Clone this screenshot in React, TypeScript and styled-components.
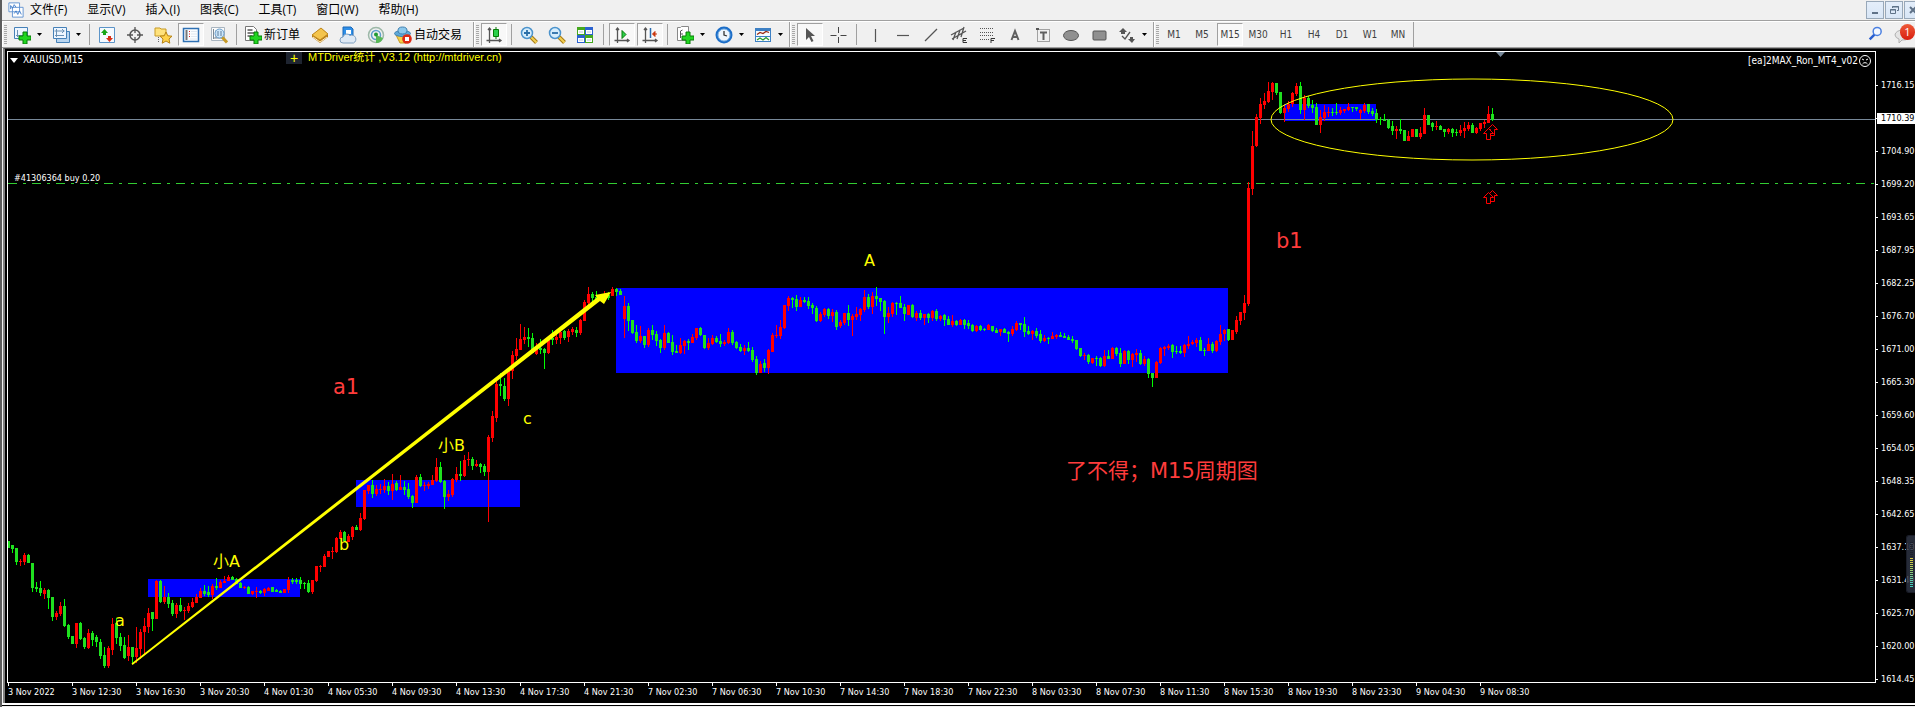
import React from "react";
import styled, { createGlobalStyle } from "styled-components";

const UI_FONT = '"Open Sans", "Noto Sans CJK SC", sans-serif';
const CHART_FONT = '"DejaVu Sans Condensed", "DejaVu Sans", "Noto Sans CJK SC", sans-serif';

const GlobalStyle = createGlobalStyle`
  * { box-sizing: border-box; }
  body {
    margin: 0;
    background: #000;
    font-family: ${UI_FONT};
    overflow: hidden;
  }
  button { font: inherit; color: inherit; }
`;

/* ---------- window chrome ---------- */

const Window = styled.div`
  display: flex;
  flex-direction: column;
  border-left: 2px solid #5c5c5c;
  background: #f0f0f0;
`;

const MenuBar = styled.nav`
  display: flex;
  align-items: center;
  height: 20px;
  padding-left: 6px;
  background: #f0f0f0;
`;

const MenuList = styled.div`
  display: flex;
  flex: 1;
  gap: 20px;
  padding-left: 6px;
`;

const MenuItem = styled.button`
  padding: 0;
  border: 0;
  background: none;
  color: #000;
  font-size: 12px;
  line-height: 18px;
  white-space: nowrap;
`;

const WindowButtons = styled.div`
  display: flex;
  gap: 1px;
  width: 49px;
  overflow: hidden;
`;

const WindowButton = styled.button`
  display: flex;
  flex: none;
  align-items: center;
  justify-content: center;
  width: 18px;
  height: 18px;
  padding: 0;
  border: 1px solid #98a8b9;
  background: linear-gradient(#e4eefa, #d8e6f6);
`;

const ToolBar = styled.div`
  display: flex;
  height: 28px;
  padding-top: 1px;
  border-top: 1px solid #a0a0a0;
  border-bottom: 1px solid #a0a0a0;
  background: #f0f0f0;
  box-shadow: inset 0 1px 0 #fff;
`;

const Band = styled.div`
  display: flex;
  align-items: center;
  padding-right: 1px;
  border-right: 1px solid #a0a0a0;
  box-shadow: inset 1px 0 0 #fff;
`;

const Grip = styled.span`
  width: 3px;
  height: 19px;
  margin: 0 1px 0 2px;
  background: repeating-linear-gradient(#a8a8a8 0 1px, #f0f0f0 1px 2px);
`;

const Divider = styled.span<{ $wide?: boolean }>`
  width: 1px;
  height: 21px;
  margin: 0 ${(p) => (p.$wide ? 4 : 3)}px;
  background: #a0a0a0;
`;

const ToolButton = styled.button<{ $pressed?: boolean }>`
  display: flex;
  align-items: center;
  justify-content: center;
  width: 26px;
  height: 23px;
  margin: 0 1px;
  padding: 0;
  border: 1px solid;
  border-color: ${(p) => (p.$pressed ? "#a0a0a0 #fff #fff #a0a0a0" : "transparent")};
  background: ${(p) => (p.$pressed ? "#f8f8f8" : "none")};
  color: #404040;
  font-family: ${CHART_FONT};
  font-size: 10px;
`;

const DropButton = styled.button`
  display: flex;
  align-items: center;
  gap: 6px;
  width: 39px;
  height: 23px;
  padding: 0 0 0 5px;
  border: 0;
  background: none;
`;

const LabelButton = styled.button<{ $width: number }>`
  display: flex;
  align-items: center;
  gap: 2px;
  width: ${(p) => p.$width}px;
  height: 23px;
  padding: 0 0 0 4px;
  border: 0;
  background: none;
  color: #000;
  font-size: 12px;
  line-height: 18px;
  white-space: nowrap;
`;

const Corner = styled.div`
  display: flex;
  flex: 1;
  justify-content: flex-end;
  align-items: center;
  gap: 5px;
`;

const CornerButton = styled.button`
  position: relative;
  display: flex;
  width: 21px;
  height: 23px;
  padding: 3px 0 0;
  border: 0;
  background: none;
`;

const Badge = styled.span`
  position: absolute;
  top: 1px;
  right: 0;
  width: 15px;
  height: 16px;
  border-radius: 8px;
  background: linear-gradient(#ee5a38, #d81e10);
  color: #fff;
  font-size: 11px;
  line-height: 16px;
  text-align: center;
`;

/* ---------- chart window ---------- */

const ChartWindow = styled.main`
  position: relative;
  display: grid;
  grid-template-columns: 1fr 39px;
  margin-left: 1px;
  padding: 2px 0 0 2px;
  border-left: 2px solid #808080;
  border-top: 1px solid #404040;
  background: #000;
  color: #fff;
  font-family: ${CHART_FONT};
`;

const PlotArea = styled.section`
  position: relative;
  border: 1px solid #fff;
`;

const PlotSvg = styled.svg`
  display: block;
  width: 100%;
  height: 630px;
`;

const PlotHeader = styled.header`
  position: absolute;
  top: 0;
  left: 0;
  right: 0;
  display: flex;
  align-items: flex-start;
  padding: 0 4px 0 2px;
  font-size: 10px;
  line-height: 14px;
`;

const Symbol = styled.h1`
  display: flex;
  align-items: center;
  gap: 5px;
  width: 276px;
  margin: 0;
  padding-top: 1px;
  font-size: 10px;
  font-weight: 400;
`;

const ExpandButton = styled.button`
  width: 16px;
  height: 12px;
  padding: 0;
  border: 0;
  background: #1e2430;
  color: #ff0;
  font-family: "Liberation Sans", sans-serif;
  font-size: 14px;
  line-height: 10px;
`;

const StatTitle = styled.span`
  flex: 1;
  padding-left: 6px;
  color: #ff0;
  font-family: "Liberation Sans", "Noto Sans CJK SC", sans-serif;
  font-size: 11px;
  line-height: 10px;
`;

const Expert = styled.span`
  display: flex;
  align-items: center;
  gap: 1px;
  padding-top: 2px;
`;

const PriceAxis = styled.ol`
  margin: 0;
  padding: 18px 0 0;
  height: 632px;
  list-style: none;
`;

const PriceTick = styled.li<{ $current?: boolean }>`
  display: flex;
  align-items: center;
  height: 33px;
  font-size: 9px;
  line-height: 11px;

  &::before {
    content: "";
    width: ${(p) => (p.$current ? 1 : 2)}px;
    height: 1px;
    background: #fff;
  }
  span {
    flex: 1;
    padding-left: ${(p) => (p.$current ? 4 : 3)}px;
    background: ${(p) => (p.$current ? "#fff" : "transparent")};
    color: ${(p) => (p.$current ? "#000" : "#fff")};
  }
`;

const TimeAxis = styled.ol`
  display: flex;
  margin: 0;
  padding: 0 0 0 1px;
  height: 20px;
  overflow: hidden;
  list-style: none;
`;

const TimeTick = styled.li`
  flex: none;
  width: 64px;
  font-size: 9px;
  line-height: 12px;
  white-space: nowrap;

  &::before {
    content: "";
    display: block;
    width: 1px;
    height: 3px;
    background: #fff;
  }
`;

const LevelMeter = styled.aside`
  position: absolute;
  right: 0;
  top: 486px;
  display: flex;
  flex-direction: column;
  gap: 1px;
  width: 9px;
  height: 58px;
  padding: 6px 2px 0 3px;
  border: 1px solid #1a1d28;
  border-right: 0;
  border-radius: 3px 0 0 3px;
  background: rgba(45, 50, 66, 0.85);
`;

const MeterBar = styled.i<{ $color: string }>`
  flex: none;
  height: 1px;
  background: ${(p) => p.$color};
`;

const TabStrip = styled.footer`
  height: 5px;
  border-top: 2px solid #fff;
  background: linear-gradient(#000 0 1px, #f0f0f0 1px);
`;

/* ---------- icons ---------- */

const Icon = ({ children, size = 18 }: { children: React.ReactNode; size?: number }) => (
  <svg width={size} height={size} viewBox="0 0 18 18" fill="none" aria-hidden="true">
    {children}
  </svg>
);

const Caret = () => (
  <svg width="5" height="3" viewBox="0 0 5 3" aria-hidden="true">
    <path d="M0 0h5L2.500 3z" fill="#000" />
  </svg>
);

const Plus = () => (
  <path d="M10 6h4v4h4v4h-4v4h-4v-4H6v-4h4z" fill="#20d620" stroke="#087a08" />
);

const AppIcon = () => (
  <Icon size={16}>
    <path d="M1 1h12v10H1z M5 6h12v11H5z" fill="#fff" stroke="#5b8fd0" />
    <path d="M3 8V4l2 3 2-4 2 3M7 13l2-3 2 4 2-4 2 4" stroke="#3a78c8" />
  </Icon>
);
const NewChartIcon = () => (
  <Icon>
    <path d="M1.500 1.500h13v11h-13z" fill="#eef6ff" stroke="#4681b8" />
    <path d="M4.500 4v7M3 9.500h9" stroke="#6b91b5" />
    <Plus />
  </Icon>
);
const ProfilesIcon = () => (
  <Icon>
    <path d="M4.500 5.500h13v11h-13z" fill="#b8d5f0" stroke="#4681b8" />
    <path d="M1.500 1.500h13v11h-13z" fill="#eef6ff" stroke="#4681b8" />
    <path d="M4.500 3v8M2.500 5h10M3 9.500h9M10 3l2 2-2 2" stroke="#6b91b5" />
  </Icon>
);
const MarketIcon = () => (
  <Icon>
    <path d="M1.500 1.500h15v15h-15z" fill="#f6faff" stroke="#5c94c8" />
    <path d="M3 7l3.500-4L10 7H8v2H5V7z" fill="#19a619" />
    <path d="M8 12l3.500 4 3.500-4h-2v-2h-3v2z" fill="#d83018" />
  </Icon>
);
const TargetIcon = () => (
  <Icon>
    <circle cx="9" cy="9" r="5" stroke="#555" strokeWidth="1.500" />
    <path d="M9 1v6M9 11v6M1 9h6M11 9h6" stroke="#555" strokeWidth="1.300" />
  </Icon>
);
const FavoritesIcon = () => (
  <Icon>
    <path d="M1 2h5l1 1h5v7H1z" fill="#ffe27c" stroke="#c79a26" />
    <path d="M4.500 11v6" stroke="#666" strokeDasharray="1 1" />
    <path d="M12 6l1.800 3.800 4.200.4-3 2.800.8 4.200L12 15l-3.800 2.200.8-4.200-3-2.800 4.200-.4z" fill="#ffd24a" stroke="#b78314" />
  </Icon>
);
const TerminalIcon = () => (
  <Icon>
    <path d="M1.500 2.500h15v13h-15z" fill="#fafdff" stroke="#2f71b4" strokeWidth="1.500" />
    <path d="M4.500 4v10" stroke="#777" strokeWidth="2" />
    <path d="M7 5.500h1M7 8h1M7 10.500h1" stroke="#d22" />
    <path d="M9 5.500h6M9 8h6M9 10.500h6M8 13h7" stroke="#e0e8f0" />
  </Icon>
);
const TesterIcon = () => (
  <Icon>
    <path d="M1.500 1.500h13v13h-13z" fill="#fbfbfb" stroke="#a9b5c0" />
    <path d="M3.500 3v10M6 4v8M3 12h9" stroke="#7b8894" />
    <path d="M12 11l5 5.500" stroke="#c79a26" strokeWidth="3" />
    <circle cx="9.500" cy="7.500" r="4.500" fill="#c9e3f8" fillOpacity=".9" stroke="#6b9fcc" />
    <path d="M8 5v5M11 5v5" stroke="#5d7e9d" />
  </Icon>
);
const OrderIcon = () => (
  <Icon>
    <path d="M1.500.5h8l3 3v11h-11z" fill="#fff" stroke="#777" />
    <path d="M3.500 4h5M3.500 7h7M3.500 10h5" stroke="#555" strokeWidth="1.500" />
    <Plus />
  </Icon>
);
const BookIcon = () => (
  <Icon>
    <path d="M1 9l9-7 7 6v3l-8 6-8-6z" fill="#b87a14" />
    <path d="M1 9l9-7 7 6-8 6z" fill="#f4c44c" stroke="#c08a20" />
    <path d="M2 11l7 5 7-5" stroke="#fff0c0" />
  </Icon>
);
const HostingIcon = () => (
  <Icon>
    <path d="M4 1h8l2 2v9H4z" fill="#2f8fe8" stroke="#1b68b8" />
    <path d="M7 4h5v4H7z" fill="#fff" />
    <path d="M4 17a3 3 0 010-6 4 4 0 017-1.500A3.500 3.500 0 0114.500 17z" fill="#dfe9f4" stroke="#7f9fc0" />
  </Icon>
);
const SignalIcon = () => (
  <Icon>
    <circle cx="9" cy="9" r="7.500" stroke="#9db8a8" strokeWidth="1.500" />
    <circle cx="9" cy="9" r="4.500" stroke="#5f9fca" strokeWidth="1.500" />
    <path d="M9 9v8c4 0 6-2 7-5z" fill="#58b858" />
    <circle cx="9" cy="8.500" r="2" fill="#1f9a34" />
  </Icon>
);
const AutoIcon = () => (
  <Icon>
    <path d="M2 9h14l-4 8H6z" fill="#f6cf45" stroke="#c79a26" />
    <ellipse cx="8.500" cy="7.500" rx="8" ry="3" fill="#5fa9d8" stroke="#3f80b0" />
    <ellipse cx="8.500" cy="4.500" rx="4.500" ry="3.500" fill="#8cc8ec" stroke="#3f80b0" />
    <circle cx="13" cy="13" r="4.800" fill="#dd2a14" />
    <path d="M11 11h4v4h-4z" fill="#fff" />
  </Icon>
);
const Axes = () => (
  <path d="M4.500 2v15M1.500 14.500H16M3 4l1.500-2L6 4M14 13l2 1.500-2 1.500" stroke="#555" strokeWidth="1.300" />
);
const CandleIcon = () => (
  <Icon>
    <Axes />
    <path d="M11 1v12" stroke="#067a06" />
    <path d="M8.500 3.500h5v7h-5z" fill="#2ad04a" stroke="#067a06" />
  </Icon>
);
const Zoom = ({ plus }: { plus?: boolean }) => (
  <Icon>
    <path d="M11 11l5.500 5.500" stroke="#a87b12" strokeWidth="4" />
    <path d="M11 11l5.500 5.500" stroke="#f2cf52" strokeWidth="2" />
    <circle cx="7" cy="7" r="5.500" fill="#d6edfc" stroke="#4b93cc" strokeWidth="1.500" />
    <path d={plus ? "M4 7h6M7 4v6" : "M4 7h6"} stroke="#2b6fa8" strokeWidth="1.800" />
  </Icon>
);
const TileIcon = () => (
  <Icon>
    <path d="M1 1h8v8H1zM9 9h8v8H9z" fill="#45a81e" />
    <path d="M9 1h8v8H9zM1 9h8v8H1z" fill="#2b62d0" />
    <path d="M2 4h6v4H2zM10 4h6v4h-6zM2 12h6v4H2zM10 12h6v4h-6z" fill="#fff" />
    <path d="M3 6h4M11 6h4M3 14h4M11 14h4" stroke="#b8c8d8" />
  </Icon>
);
const ScrollIcon = () => (
  <Icon>
    <Axes />
    <path d="M9 4.500v8l4-4z" fill="#2ad04a" stroke="#067a06" />
  </Icon>
);
const ShiftIcon = () => (
  <Icon>
    <Axes />
    <path d="M9.500 2v10" stroke="#2a6cb0" strokeWidth="1.500" />
    <path d="M16 8h-3M14 5.500L11.500 8l2.500 2.500z" fill="#c8340c" stroke="#c8340c" />
  </Icon>
);
const IndicatorIcon = () => (
  <Icon>
    <path d="M1.500 1.500h3l1-1h7v14h-11z" fill="#fff" stroke="#888" />
    <path d="M4.500 12V5l2-1M4 8h3" stroke="#555" />
    <Plus />
  </Icon>
);
const ClockIcon = () => (
  <Icon>
    <circle cx="9" cy="9" r="8.500" fill="#1c6ec8" />
    <circle cx="9" cy="9" r="6" fill="#eef5fc" stroke="#7fb4e6" />
    <path d="M9 5v4l3 1" stroke="#333" strokeWidth="1.300" />
  </Icon>
);
const TemplateIcon = () => (
  <Icon>
    <path d="M1 2h16v14H1z" fill="#3d80c4" />
    <path d="M2 5h14v5H2zM2 11h14v4H2z" fill="#f6fbff" />
    <path d="M3 8.500l3-2 3 1 3-2 3 1" stroke="#9a2a10" strokeWidth="1.300" />
    <path d="M3 14l3-2 3 2 3-2.500 3 2.500" stroke="#2a9a2a" strokeWidth="1.300" />
  </Icon>
);
const CursorIcon = () => (
  <Icon>
    <path d="M5 2v12l3-3 2.500 5 2-1L10 10h4z" fill="#555" />
  </Icon>
);
const CrossIcon = () => (
  <Icon>
    <path d="M9.500 1v6M9.500 11v6M1.500 9.500h6M11.500 9.500h6" stroke="#444" />
  </Icon>
);
const StrokeIcon = ({ d }: { d: string }) => (
  <Icon>
    <path d={d} stroke="#555" strokeWidth="1.200" />
  </Icon>
);
const ChannelIcon = () => (
  <Icon>
    <path d="M1 9L14 2M2 13L16 5M3 14l3-8M7 13l3-9M11 11l3-10" stroke="#555" strokeWidth="1.300" />
    <path d="M17 12.500h-4v4h4M13 14.500h3" stroke="#333" />
  </Icon>
);
const FiboIcon = () => (
  <Icon>
    <path d="M2 2.500h14M2 6.500h14M2 9.500h14M2 13.500h9" stroke="#555" strokeDasharray="1 1" />
    <path d="M13 17v-4.500h4M13 14.500h3" stroke="#333" />
  </Icon>
);
const LetterIcon = () => (
  <Icon>
    <path d="M5.500 14L9 5l3.500 9M6.500 11h5" stroke="#606060" strokeWidth="2" />
  </Icon>
);
const TextBoxIcon = () => (
  <Icon>
    <path d="M3.500 3.500h12v12h-12z" stroke="#555" strokeDasharray="1 1" />
    <path d="M2 2h3v2H2z" fill="#555" />
    <path d="M6 6.500h7M9.500 6v8" stroke="#606060" strokeWidth="2" />
  </Icon>
);
const EllipseIcon = () => (
  <Icon>
    <ellipse cx="9" cy="9.500" rx="7.500" ry="5" fill="#909090" stroke="#555" />
  </Icon>
);
const RectIcon = () => (
  <Icon>
    <rect x="3" y="5" width="13" height="9" rx="1" fill="#909090" stroke="#555" />
  </Icon>
);
const ArrowsIcon = () => (
  <Icon>
    <path d="M5 2l4 4H7v2H3V6H1zM14 17l-4-4h2v-2h3v2h2z" fill="#555" />
    <path d="M4 10l3 3 5-7" stroke="#555" strokeWidth="1.300" />
  </Icon>
);
const SearchIcon = () => (
  <Icon size={15}>
    <path d="M2 16l6-6" stroke="#2a5fd0" strokeWidth="3" />
    <circle cx="11" cy="6.500" r="4.800" fill="#f4f8ff" stroke="#4a7fe0" strokeWidth="1.800" />
  </Icon>
);
const ChatIcon = () => (
  <svg width="18" height="18" viewBox="0 0 18 18" aria-hidden="true">
    <path d="M1 9a8 5 0 0116 0 8 5 0 01-9 5l-3 3v-4a6 5 0 01-4-4z" fill="#e4e4e4" stroke="#b0b0b0" />
  </svg>
);
const SadFace = () => (
  <svg width="12" height="12" viewBox="0 0 12 12" fill="none" stroke="#fff" aria-hidden="true">
    <circle cx="6" cy="6" r="5.500" />
    <path d="M3 4l2 1M9 4L7 5M3.500 9a3 3 0 015 0" />
  </svg>
);

/* ---------- chart data ---------- */

// One bar per entry: direction, then high, body top, body bottom and low on the plot's scale.
const BARS = `
G 541 541 548 548;G 545 545 549 553;G 548 548 562 565;R 559 561 562 566;R 553 555 562 565;G 554 555 563 563;
G 563 563 588 592;G 582 587 589 592;G 581 588 593 596;R 588 590 594 599;G 589 590 598 609;G 597 597 617 621;
R 611 613 617 620;R 602 606 614 616;G 599 606 626 627;G 624 625 637 639;G 636 636 644 644;R 623 623 644 648;
G 622 623 639 640;G 637 638 647 649;R 629 633 648 649;G 631 633 640 646;G 635 637 642 647;G 639 642 656 659;
G 647 655 666 668;R 646 648 666 668;R 618 624 650 655;G 618 623 638 644;G 633 637 646 651;G 637 645 658 659;
R 635 647 656 661;G 647 647 657 664;R 627 648 657 663;R 629 632 649 659;R 618 626 632 654;R 608 613 627 633;
G 612 612 619 631;R 580 581 619 619;G 580 581 602 603;R 586 597 602 604;G 593 597 604 608;G 600 603 614 616;
R 603 605 614 618;G 598 605 611 612;R 607 610 611 620;R 603 606 611 613;R 598 602 607 608;R 594 597 603 603;
R 588 591 598 598;G 585 591 594 596;G 586 592 595 597;R 584 586 595 599;G 578 586 588 590;R 580 582 588 588;
R 576 581 583 583;R 575 577 581 581;G 576 577 580 580;G 578 579 584 584;G 582 583 588 588;R 586 587 588 589;
G 586 587 594 594;R 591 591 594 595;R 587 591 592 598;G 590 591 593 594;R 588 589 593 596;R 587 588 591 591;
G 587 587 592 592;G 589 590 592 592;G 590 591 593 593;R 589 589 593 593;R 577 580 590 593;G 578 580 582 584;
G 578 580 582 584;G 577 580 584 589;G 582 583 584 589;G 580 583 592 593;R 580 580 592 594;R 566 566 581 582;
R 565 566 567 572;R 554 556 567 567;R 551 551 557 557;R 547 551 552 559;R 537 538 552 553;R 530 532 539 539;
G 531 532 541 542;R 534 536 542 542;R 526 527 537 540;G 525 527 530 530;R 513 518 530 531;R 490 490 519 520;
R 485 485 491 494;G 480 485 494 498;R 485 489 494 496;R 484 489 490 494;R 479 486 490 493;G 482 486 491 495;
R 474 484 491 500;G 481 483 490 491;R 475 487 490 490;G 481 487 490 495;G 483 489 497 499;G 495 496 503 508;
R 475 477 503 503;G 474 477 486 487;R 482 485 486 491;R 482 484 486 489;R 475 480 485 485;R 458 467 481 482;
G 462 467 482 483;G 480 481 497 509;R 490 494 497 501;R 478 479 495 497;R 467 474 480 482;G 461 474 476 481;
R 455 460 476 477;R 452 459 460 466;G 457 459 466 470;R 460 464 466 467;G 463 464 467 473;G 464 466 472 476;
R 435 437 472 522;R 411 416 438 442;R 380 384 418 422;G 373 384 386 396;G 378 386 399 401;R 368 369 399 406;
R 351 355 371 379;R 338 349 356 360;R 324 339 350 350;R 327 337 340 344;G 328 337 339 347;G 333 338 353 353;
R 343 349 354 355;G 339 348 350 354;G 348 349 353 369;R 337 338 353 354;G 330 338 340 345;R 334 337 340 344;
R 330 332 338 344;G 330 331 338 340;R 329 331 337 342;R 327 329 332 335;G 327 330 333 337;R 319 320 333 335;
R 300 302 321 321;R 287 294 303 309;G 292 294 298 305;G 291 297 299 301;R 295 296 299 300;R 291 294 299 299;
G 292 295 298 300;R 287 289 296 296;G 288 289 292 296;G 289 291 295 295;R 296 306 319 338;G 303 306 321 331;
G 320 320 333 334;G 325 332 341 343;R 326 336 341 343;G 336 336 345 348;R 328 330 345 347;G 325 330 335 340;
G 331 334 341 346;G 339 340 348 353;R 325 333 348 350;G 332 333 343 343;G 335 342 352 355;G 345 351 353 353;
R 338 345 353 354;R 340 341 346 354;G 339 341 343 350;R 334 337 343 343;R 328 328 338 340;G 327 328 335 336;
G 335 335 348 349;R 338 343 348 350;R 335 338 344 345;G 336 338 342 343;G 334 341 344 347;R 340 342 344 346;
R 328 332 343 344;G 330 332 343 345;G 341 342 348 349;G 344 347 351 352;R 345 348 351 355;G 342 348 351 352;
G 347 350 360 362;G 356 359 373 375;R 361 364 373 373;G 359 363 368 372;R 349 350 368 374;R 333 335 352 352;
R 325 335 336 338;R 320 327 336 339;R 305 305 328 329;R 296 298 306 311;G 297 298 300 308;G 295 299 307 311;
R 297 300 307 307;G 297 300 302 303;G 297 301 306 309;G 303 305 308 314;G 306 308 321 322;R 312 314 321 322;
R 308 309 315 317;G 308 309 316 319;R 309 312 316 322;G 310 312 327 330;R 320 322 326 328;R 313 313 323 325;
G 305 313 320 326;R 314 316 320 336;R 307 314 317 320;R 308 309 315 321;R 290 297 310 312;G 294 297 307 309;
R 292 296 307 314;G 287 296 299 306;G 298 298 302 311;G 300 301 317 334;R 307 313 317 323;R 302 303 314 317;
G 302 303 304 315;G 296 303 308 308;G 304 307 314 321;R 305 305 315 315;G 304 305 317 318;R 311 313 318 321;
G 310 313 318 320;R 314 314 318 325;G 313 314 318 323;R 310 311 318 321;G 309 311 319 321;R 315 316 319 321;
G 314 315 320 326;G 316 319 325 325;R 315 321 325 327;G 320 321 325 326;R 319 320 325 325;G 319 320 325 329;
G 320 323 326 329;G 324 325 331 332;R 325 326 331 332;G 325 326 330 331;G 328 329 330 331;R 324 325 330 330;
G 326 326 331 332;G 328 330 333 333;R 329 329 332 336;G 328 329 333 333;G 331 332 334 342;R 326 329 334 336;
R 321 323 330 331;G 323 323 325 330;G 317 324 332 337;G 326 331 334 335;R 330 331 334 340;G 328 331 336 338;
G 330 334 341 343;R 335 338 341 342;G 337 338 339 344;R 332 336 339 339;R 334 335 337 339;G 332 335 337 337;
G 333 336 338 338;G 335 337 340 340;G 336 339 341 343;G 340 340 349 350;G 348 348 356 357;R 353 355 356 360;
G 354 355 362 364;R 358 358 363 364;G 356 358 359 366;G 357 358 366 367;R 350 356 366 367;G 350 356 359 359;
R 347 348 359 359;G 347 348 354 356;G 348 353 364 367;R 350 351 364 364;G 350 351 360 364;R 353 354 360 367;
R 349 353 355 362;G 350 353 364 365;R 356 359 364 366;G 358 359 374 378;G 373 373 378 387;R 361 362 378 378;
R 347 348 363 364;R 346 347 349 356;R 344 346 348 350;G 344 345 352 358;G 346 351 352 354;G 346 351 353 354;
R 344 345 353 357;R 336 344 346 349;R 340 342 344 345;R 338 340 343 347;G 337 340 351 351;G 348 350 351 356;
R 338 344 351 351;G 342 344 351 353;R 340 341 351 352;R 325 334 342 345;R 329 330 334 341;G 329 329 340 341;
R 330 330 340 340;R 316 320 332 334;R 312 312 321 325;R 295 303 313 320;R 182 188 304 306;R 131 146 189 195;
R 114 117 146 147;R 98 104 118 124;R 93 101 105 109;R 82 91 102 103;R 82 83 92 100;G 83 83 93 95;
G 92 92 113 114;R 105 108 113 122;R 101 104 109 112;R 92 93 104 107;R 83 86 94 96;G 82 86 110 114;
R 95 98 110 120;G 96 98 106 108;G 100 105 108 113;G 103 107 125 125;R 110 117 125 133;R 105 112 118 121;
R 107 112 113 117;G 108 112 113 116;G 103 112 113 115;R 107 110 113 115;R 109 109 111 113;R 103 107 110 111;
G 107 107 108 112;G 107 107 109 111;R 109 110 113 119;R 103 105 111 113;G 104 104 112 114;G 108 111 114 116;
G 109 113 120 123;G 117 119 120 125;G 114 119 121 121;G 119 120 128 129;G 121 126 131 135;R 126 129 131 139;
G 119 129 131 134;G 130 130 141 141;R 131 136 141 141;R 129 129 137 137;G 129 129 137 137;R 127 133 137 139;
R 108 115 134 134;G 115 115 125 125;G 122 123 127 131;R 121 126 127 130;G 125 126 130 130;G 129 129 132 137;
R 128 129 132 134;G 128 129 133 137;G 129 132 133 136;R 125 130 133 136;R 122 128 131 138;R 122 125 129 131;
G 123 125 133 133;R 127 128 133 134;R 123 123 129 131;R 120 122 124 128;R 106 114 123 123;G 108 114 120 121`
  .trim()
  .split(";")
  .map((row) => {
    const [dir, ...levels] = row.trim().split(" ");
    const [high, top, bottom, low] = levels.map(Number);
    return { up: dir === "R", high, top, bottom, low };
  });

const BAR_STEP = 4;

const Candles = () => (
  <g shapeRendering="crispEdges">
    {BARS.map((b, i) => {
      const x = 8 + i * BAR_STEP;
      const low = Math.max(b.low, b.bottom);
      return (
        <React.Fragment key={i}>
          <path d={`M${x} ${b.high}h1V${low}h-1z`} fill={b.up ? "#f00" : "#0f0"} />
          <path d={`M${x - 1} ${b.top}h3V${b.bottom}h-3z`} fill={b.up ? "#f00" : "#1fe01f"} />
        </React.Fragment>
      );
    })}
  </g>
);

const ZONES = [
  { x: 148, y: 579, w: 152, h: 18 },
  { x: 356, y: 480, w: 164, h: 27 },
  { x: 616, y: 288, w: 612, h: 85 },
  { x: 1284, y: 104, w: 92, h: 17 },
];

const NOTES = [
  { x: 115, y: 626, text: "a" },
  { x: 213, y: 567, text: "小A" },
  { x: 339, y: 550, text: "b" },
  { x: 438, y: 451, text: "小B" },
  { x: 523, y: 424, text: "c" },
  { x: 864, y: 266, text: "A" },
  { x: 333, y: 394, text: "a1", big: true },
  { x: 1276, y: 248, text: "b1", big: true },
  { x: 1066, y: 478, text: "了不得；M15周期图", big: true },
];

const Note = styled.text<{ $big?: boolean }>`
  font-family: "DejaVu Sans", "Noto Sans CJK SC", sans-serif;
  font-size: ${(p) => (p.$big ? 21 : 16)}px;
  fill: ${(p) => (p.$big ? "#ff3c3c" : "#ff0")};
`;

const BUY_MARKS = [
  { x: 1492, y: 124 },
  { x: 1488, y: 128 },
  { x: 1492, y: 190 },
  { x: 1488, y: 192 },
];

const PRICES = [
  "1716.15", "1710.39", "1704.90", "1699.20", "1693.65", "1687.95", "1682.25",
  "1676.70", "1671.00", "1665.30", "1659.60", "1654.05", "1648.35", "1642.65",
  "1637.10", "1631.40", "1625.70", "1620.00", "1614.45",
];
const CURRENT_PRICE = "1710.39";

const TIMES = [
  "3 Nov 2022", "3 Nov 12:30", "3 Nov 16:30", "3 Nov 20:30", "4 Nov 01:30", "4 Nov 05:30",
  "4 Nov 09:30", "4 Nov 13:30", "4 Nov 17:30", "4 Nov 21:30", "7 Nov 02:30", "7 Nov 06:30",
  "7 Nov 10:30", "7 Nov 14:30", "7 Nov 18:30", "7 Nov 22:30", "8 Nov 03:30", "8 Nov 07:30",
  "8 Nov 11:30", "8 Nov 15:30", "8 Nov 19:30", "8 Nov 23:30", "9 Nov 04:30", "9 Nov 08:30",
];

const MENU = ["文件(F)", "显示(V)", "插入(I)", "图表(C)", "工具(T)", "窗口(W)", "帮助(H)"];
const PERIODS = ["M1", "M5", "M15", "M30", "H1", "H4", "D1", "W1", "MN"];

const METER = [
  "#1c202c", "#1c202c", "#1c202c", "#1c202c", "#1c202c", "#1c202c", "#1c202c", "#1c202c",
  "#d8c83c", "#d0cc44", "#c8cc4c", "#bccc54", "#b0cc5c", "#a4cc64", "#98cc70", "#8ccc7c",
  "#80cc88", "#74cc94", "#68cca0", "#5cccac", "#50ccb4", "#48ccb8", "#40ccb8",
];

const Tool = ({ label, pressed, children }: { label: string; pressed?: boolean; children: React.ReactNode }) => (
  <ToolButton type="button" aria-label={label} aria-pressed={pressed} $pressed={pressed}>
    {children}
  </ToolButton>
);

const Drop = ({ label, children }: { label: string; children: React.ReactNode }) => (
  <DropButton type="button" aria-label={label} aria-haspopup="menu">
    {children}
    <Caret />
  </DropButton>
);

const Plot = () => (
  <PlotArea aria-label="XAUUSD M15">
    <PlotSvg>
      <g transform="translate(-8 -52)">
        {ZONES.map((z) => (
          <rect key={z.x} x={z.x} y={z.y} width={z.w} height={z.h} fill="#00f" />
        ))}
      </g>
      <line x1="0" x2="100%" y1="67.5" y2="67.5" stroke="#778899" />
      <line x1="0" x2="100%" y1="131.5" y2="131.5" stroke="#32cd32" strokeDasharray="9 6 3 6" />
      <g transform="translate(-8 -52)">
        <Candles />
        <ellipse cx="1472" cy="119.5" rx="201" ry="40.5" fill="none" stroke="#ff0" />
        <path d="M131.500 663.500L597 297.500 595 295 611 292 604 304 600 301 132.500 665z" fill="#ff0" />
        <path d="M1496 52h9l-4.500 5z" fill="#778899" />
        {BUY_MARKS.map((m) => (
          <path
            key={`${m.x}-${m.y}`}
            d={`M${m.x + 0.5} ${m.y + 0.5}l5 5h-3v6h-4v-6h-3z`}
            fill="#000"
            stroke="#f00"
          />
        ))}
        <text x="14" y="181" fontSize="9" fill="#fff">
          #41306364 buy 0.20
        </text>
        {NOTES.map((n) => (
          <Note key={n.text} x={n.x} y={n.y} $big={n.big}>
            {n.text}
          </Note>
        ))}
      </g>
    </PlotSvg>
    <PlotHeader>
      <Symbol>
        <svg width="8" height="5" viewBox="0 0 8 5" aria-hidden="true">
          <path d="M0 0h8L4 5z" fill="#fff" />
        </svg>
        XAUUSD,M15
      </Symbol>
      <ExpandButton type="button">+</ExpandButton>
      <StatTitle>MTDriver统计 ,V3.12 (http://mtdriver.cn)</StatTitle>
      <Expert>
        [ea]2MAX_Ron_MT4_v02
        <SadFace />
      </Expert>
    </PlotHeader>
  </PlotArea>
);

export default function App() {
  return (
    <>
      <GlobalStyle />
      <Window>
        <MenuBar>
          <AppIcon />
          <MenuList>
            {MENU.map((m) => (
              <MenuItem key={m} type="button">{m}</MenuItem>
            ))}
          </MenuList>
          <WindowButtons>
            <WindowButton type="button" aria-label="最小化">
              <svg width="10" height="10"><path d="M2 7h6v2H2z" fill="#5f7288" /></svg>
            </WindowButton>
            <WindowButton type="button" aria-label="还原">
              <svg width="10" height="10" fill="none" stroke="#5f7288">
                <path d="M3.500 3V1.500h6v4H8M3 2h7M1.500 4.500h5v4h-5zM1 5h6" />
              </svg>
            </WindowButton>
            <WindowButton type="button" aria-label="关闭">
              <svg width="10" height="10"><path d="M2 2l6 6M8 2L2 8" stroke="#5f7288" strokeWidth="2" /></svg>
            </WindowButton>
          </WindowButtons>
        </MenuBar>

        <ToolBar role="toolbar">
          <Band>
            <Grip />
            <Drop label="新图表"><NewChartIcon /></Drop>
            <Drop label="配置文件"><ProfilesIcon /></Drop>
            <Divider />
            <Tool label="市场报价"><MarketIcon /></Tool>
            <Tool label="数据窗口"><TargetIcon /></Tool>
            <Tool label="导航"><FavoritesIcon /></Tool>
            <Tool label="终端" pressed><TerminalIcon /></Tool>
            <Tool label="策略测试"><TesterIcon /></Tool>
            <Divider />
            <LabelButton type="button" $width={66}><OrderIcon />新订单</LabelButton>
            <Tool label="编辑器"><BookIcon /></Tool>
            <Tool label="主机"><HostingIcon /></Tool>
            <Tool label="信号"><SignalIcon /></Tool>
            <LabelButton type="button" $width={82}><AutoIcon />自动交易</LabelButton>
          </Band>
          <Band>
            <Grip />
            <Tool label="蜡烛图" pressed><CandleIcon /></Tool>
            <Divider />
            <Tool label="放大"><Zoom plus /></Tool>
            <Tool label="缩小"><Zoom /></Tool>
            <Tool label="平铺"><TileIcon /></Tool>
            <Divider $wide />
            <Tool label="自动滚动" pressed><ScrollIcon /></Tool>
            <Tool label="图表平移" pressed><ShiftIcon /></Tool>
            <Divider />
            <Drop label="指标"><IndicatorIcon /></Drop>
            <Drop label="周期"><ClockIcon /></Drop>
            <Drop label="模板"><TemplateIcon /></Drop>
          </Band>
          <Band>
            <Grip />
            <Tool label="光标" pressed><CursorIcon /></Tool>
            <Tool label="十字线"><CrossIcon /></Tool>
            <Divider $wide />
            <Tool label="垂直线"><StrokeIcon d="M9.500 3v13" /></Tool>
            <Tool label="水平线"><StrokeIcon d="M3 9.500h12" /></Tool>
            <Tool label="趋势线"><StrokeIcon d="M3 15L15 3" /></Tool>
            <Tool label="通道"><ChannelIcon /></Tool>
            <Tool label="斐波那契"><FiboIcon /></Tool>
            <Tool label="文字"><LetterIcon /></Tool>
            <Tool label="文字标签"><TextBoxIcon /></Tool>
            <Tool label="椭圆"><EllipseIcon /></Tool>
            <Tool label="矩形"><RectIcon /></Tool>
            <Drop label="箭头"><ArrowsIcon /></Drop>
          </Band>
          <Band>
            <Grip />
            {PERIODS.map((p) => (
              <Tool key={p} label={p} pressed={p === "M15"}>{p}</Tool>
            ))}
          </Band>
          <Corner>
            <CornerButton type="button" aria-label="搜索"><SearchIcon /></CornerButton>
            <CornerButton type="button" aria-label="消息">
              <ChatIcon />
              <Badge>1</Badge>
            </CornerButton>
          </Corner>
        </ToolBar>

        <ChartWindow>
          <Plot />
          <PriceAxis>
            {PRICES.map((p) => (
              <PriceTick key={p} $current={p === CURRENT_PRICE}>
                <span>{p}</span>
              </PriceTick>
            ))}
          </PriceAxis>
          <TimeAxis>
            {TIMES.map((t) => (
              <TimeTick key={t}>{t}</TimeTick>
            ))}
          </TimeAxis>
          <LevelMeter aria-hidden="true">
            {METER.map((c, i) => (
              <MeterBar key={i} $color={c} />
            ))}
          </LevelMeter>
        </ChartWindow>
        <TabStrip />
      </Window>
    </>
  );
}
